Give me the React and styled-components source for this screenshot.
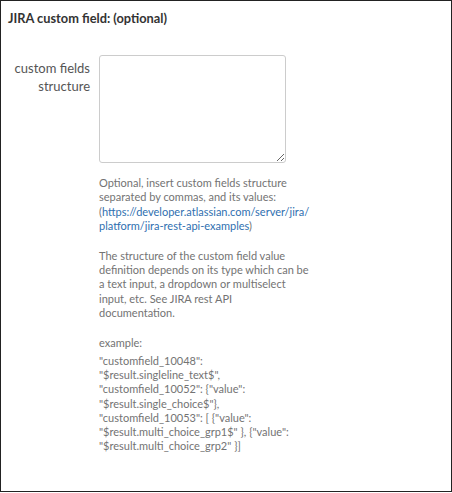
import React from "react";
import styled, { createGlobalStyle } from "styled-components";

const Global = createGlobalStyle`
  html, body { margin: 0; padding: 0; background: #fff; }
  body { font-family: Lato, "Open Sans", sans-serif; }
`;

const Panel = styled.section`
  box-sizing: border-box;
  width: 452px;
  height: 492px;
  border: 1px solid #222;
  background: #fff;
  padding: 9px 7px 0 7px;
`;

const Title = styled.h3`
  margin: 0;
  font-size: 12.8px;
  font-weight: 700;
  color: #333;
  line-height: 16px;
`;

const FieldRow = styled.div`
  display: grid;
  grid-template-columns: 82px 187px;
  column-gap: 9px;
  margin-top: 29px;
`;

const Label = styled.label`
  text-align: right;
  font-size: 13px;
  color: #555;
  line-height: 18px;
  padding-top: 4px;
`;

const Control = styled.div`
  display: flex;
  flex-direction: column;
`;

const TextArea = styled.textarea`
  box-sizing: border-box;
  width: 187px;
  height: 108px;
  border: 1px solid #ccc;
  border-radius: 3px;
  margin: 0;
  padding: 4px;
  font-family: inherit;
  outline: none;
`;

const Help = styled.div`
  margin-top: 13px;
  font-size: 11px;
  line-height: 14.3px;
  color: #737373;
  white-space: nowrap;
`;

const Para = styled.p`
  margin: 0 0 ${(p) => p.$gap}px 0;
`;

const Link = styled.a`
  color: #2f6fb0;
  text-decoration: none;
`;

export default function App() {
  return (
    <>
      <Global />
      <Panel>
        <Title>JIRA custom field: (optional)</Title>
        <FieldRow>
          <Label>
            custom fields
            <br />
            structure
          </Label>
          <Control>
            <TextArea />
            <Help>
              <Para $gap={15.7}>
                Optional, insert custom fields structure
                <br />
                separated by commas, and its values:
                <br />(
                <Link href="#">
                  https://developer.atlassian.com/server/jira/
                  <br />
                  platform/jira-rest-api-examples
                </Link>
                )
              </Para>
              <Para $gap={15.7}>
                The structure of the custom field value
                <br />
                definition depends on its type which can be
                <br />
                a text input, a dropdown or multiselect
                <br />
                input, etc. See JIRA rest API
                <br />
                documentation.
              </Para>
              <Para $gap={3.3}>example:</Para>
              <Para $gap={0}>
                "customfield_10048":
                <br />
                "$result.singleline_text$",
                <br />
                "customfield_10052": {"{\"value\":"}
                <br />
                "$result.single_choice$"{"},"}
                <br />
                "customfield_10053": [ {"{\"value\":"}
                <br />
                "$result.multi_choice_grp1$" {"},"} {"{\"value\":"}
                <br />
                "$result.multi_choice_grp2" {"}]"}
              </Para>
            </Help>
          </Control>
        </FieldRow>
      </Panel>
    </>
  );
}
